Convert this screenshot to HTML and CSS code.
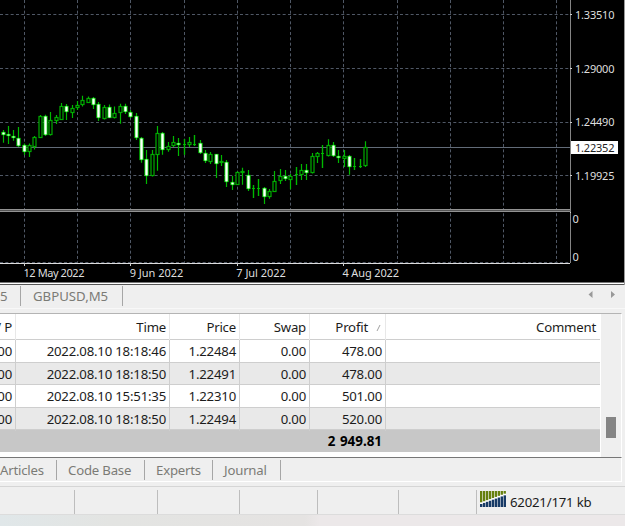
FILE: index.html
```
<!DOCTYPE html>
<html>
<head>
  <meta charset="utf-8">
  <title>Terminal</title>
  <link rel="stylesheet" href="styles.css">
</head>
<body>
  <div class="chart">
    <svg id="chart" width="625" height="285" viewBox="0 0 625 285">
      <g id="grid"></g>
      <path class="bid" d="M0 147.5H570"/>
      <g id="candles"></g>
      <path class="split" d="M0 209.5H570M0 211.5H570"/>
      <path class="split-mid" d="M0 210.5H570"/>
      <path class="axis" d="M570.5 0V263"/>
      <path class="base" d="M0 263.5H570"/>
      <path class="tick" d="M570 14.5h2M570 68.5h2M570 122.5h2M570 175.5h2M24.5 263v3M130.5 263v3M237.5 263v3M343.5 263v3M570 212.5h1"/>
      <rect class="tag" x="571" y="141" width="47" height="13"/>
      <g class="label">
        <text x="575" y="18.8" textLength="39.5">1.33510</text>
        <text x="575" y="72.8" textLength="39.5">1.29000</text>
        <text x="575" y="126.3" textLength="39.5">1.24490</text>
        <text x="575" y="151.8" textLength="39.5" class="dark">1.22352</text>
        <text x="575" y="180.3" textLength="39.5">1.19925</text>
        <text x="572.4" y="222.8">0</text>
        <text x="572.4" y="260.8">0</text>
        <text x="23.5" y="276.8" textLength="61">12 May 2022</text>
        <text x="129.7" y="276.8" textLength="53.5">9 Jun 2022</text>
        <text x="236.3" y="276.8" textLength="49.5">7 Jul 2022</text>
        <text x="342.5" y="276.8" textLength="56.5">4 Aug 2022</text>
      </g>
    </svg>
  </div>

  <div class="chart-tabs">
    <span class="tab first">5</span>
    <span class="tab pair">GBPUSD,M5</span>
    <svg class="arrows" width="30" height="9" viewBox="0 0 30 9">
      <path d="M5.500 1v7L1.500 4.500zM24 1v7l4-3.500z"/>
    </svg>
  </div>

  <div class="toolbox">
    <div class="table">
      <div class="row head">
        <div>/ P</div><div>Time</div><div>Price</div><div>Swap</div>
        <div>Profit<svg class="sort" width="5" height="8" viewBox="0 0 5 8"><path d="M1 7L4 1"/></svg></div>
        <div>Comment</div>
      </div>
      <div class="row"><div>00</div><div>2022.08.10 18:18:46</div><div>1.22484</div><div>0.00</div><div>478.00</div><div></div></div>
      <div class="row alt"><div>00</div><div>2022.08.10 18:18:50</div><div>1.22491</div><div>0.00</div><div>478.00</div><div></div></div>
      <div class="row"><div>00</div><div>2022.08.10 15:51:35</div><div>1.22310</div><div>0.00</div><div>501.00</div><div></div></div>
      <div class="row alt"><div>00</div><div>2022.08.10 18:18:50</div><div>1.22494</div><div>0.00</div><div>520.00</div><div></div></div>
      <div class="total">2 949.81</div>
    </div>
    <div class="scroll"><div class="thumb"></div></div>
  </div>

  <div class="panel-tabs">
    <span class="tab articles">Articles</span>
    <span class="tab code">Code Base</span>
    <span class="tab experts">Experts</span>
    <span class="tab journal">Journal</span>
  </div>

  <div class="status">
    <div class="cell"></div><div class="cell"></div><div class="cell"></div>
    <div class="cell"></div><div class="cell"></div><div class="cell"></div>
    <div class="traffic">
      <svg id="signal" width="26" height="16" viewBox="0 0 26 16"></svg>
      <span>62021/171 kb</span>
    </div>
  </div>
  <div class="desktop"></div>

<script>
  // high, body top, body bottom, low, 1 = bearish (filled)
  const bars = [
    [130,132,135,142.7,1],[126,133.7,136,144,1],[130,136,138,140.7,1],[127,137.5,146,147,1],
    [143.5,145.3,151.7,155,1],[143.5,144.5,151.5,157,0],[136,137,147,149.5,0],[115,116.3,137.5,138,0],
    [114.7,116.3,135,136,1],[112,119.5,134.5,135.5,0],[115,116.5,120.5,124,0],[103,105.5,119.5,120,0],
    [104,105.5,112,120,1],[105,108,112.7,118,0],[101,104.5,108,110,0],[95.7,100,104.7,106.5,0],
    [96.5,98,103,103,0],[97,98,104.5,109,1],[102,103.7,118,121,1],[105,106.5,118.5,119.5,0],
    [104.5,106.5,117.5,118,1],[106.5,112.5,117.5,118.5,0],[103.7,105.5,112.5,123.7,0],[103.7,105.5,112,114,1],
    [110,111.5,116.7,118,1],[113,116.3,138,140,1],[137,138,160,162.7,1],[150,159,176,184,1],
    [150,154,176,176.5,0],[126,133,154.7,170.7,0],[132,133,149.5,154.7,1],[142,146,149.7,151.7,0],
    [136,142,146,147,0],[138,142.7,144.7,156,1],[139,144,144.4,154.7,0],[137,142.3,144.7,147,0],
    [135,144,144.4,146,0],[140,143,153.3,154,1],[150,153,161.3,163,1],[152,154,161.7,164,0],
    [154,154,164,178,1],[155,161.3,163.3,166,0],[160,161.7,181.7,187,1],[176,182,184.7,190,1],
    [171.5,172,184.7,185,0],[167.7,171,172.7,184.7,0],[170,175,188.7,191,1],[185,188,188.4,198,0],
    [179,188,188.4,196,0],[187,188.3,197,204,1],[189,190.7,197,198.7,0],[171,181,191.7,192,0],
    [169,176,181.3,184,0],[170,176,179,181,1],[174,176,180,189.3,0],[167,174.3,175,185,0],
    [164,170,175,180,0],[164,170.3,173.3,180,1],[153,156,173,173.5,0],[152,153.3,157,163,0],
    [145,153,153.4,168,0],[139.3,145.3,156,156.5,0],[142,145.3,156,157,1],[150,156,158,163,1],
    [150,156,159,167,0],[155,156,167.3,174.7,1],[158,166,167.3,170,0],[159,166,166.4,168,0],
    [141.3,147,166.3,167,0]
  ];
  let out = "";
  bars.forEach(([high, top, bottom, low, bear], i) => {
    const x = Math.round(3 + i * 5.333 - 0.5) + 0.5;
    const t = Math.round(top), b = Math.round(bottom);
    out += `<path class="wick" d="M${x} ${high}V${t}M${x} ${b}V${low}"/>`;
    if (b - t < 2) {
      out += `<path class="wick" d="M${x - 1.5} ${t + 0.5}h3M${x} ${high}V${low}"/>`;
    } else {
      out += `<rect class="${bear ? "bear" : "bull"}" x="${x - 1.5}" y="${t + 0.5}" width="3" height="${b - t - 1}"/>`;
      if (bear) out += `<path class="core" d="M${x} ${t + 0.5}V${b - 0.5}"/>`;
    }
  });
  document.getElementById("candles").innerHTML = out;

  let grid = "";
  [24, 77, 130, 184, 237, 290, 343, 397, 450, 503, 556].forEach(x => {
    grid += `<path d="M${x + 0.5} 0V263"/>`;
  });
  [14, 68, 122, 175, 262].forEach(y => {
    grid += `<path d="M0 ${y + 0.5}H570"/>`;
  });
  document.getElementById("grid").innerHTML = grid;

  let signal = `<path class="trend" d="M0 12.5L26 3.500"/>`;
  for (let i = 0; i < 9; i++) {
    const x = i * 2.95;
    const h = 3 + i * 1.08;
    signal += `<rect class="green" x="${x}" y="0" width="2.300" height="${14.3 - h}"/>`;
    signal += `<rect class="blue" x="${x}" y="${16 - h}" width="2.400" height="${h}"/>`;
  }
  document.getElementById("signal").innerHTML = signal;
</script>
</body>
</html>
```
FILE: styles.css
```
* {
  box-sizing: border-box;
}
body {
  margin: 0;
  width: 625px;
  height: 526px;
  overflow: hidden;
  background: #efefef;
  font-family: "Noto Sans", "Open Sans", sans-serif;
  font-size: 13.2px;
  letter-spacing: -0.2px;
  color: #1c1c1c;
}
svg {
  display: block;
}
.chart {
  height: 285px;
  background: linear-gradient(#000 282px, #777 282px, #777 283px, #fff 283px, #fff 284px, #555 284px);
  border-right: 1px solid #999;
}
#grid path {
  stroke: #505866;
  stroke-dasharray: 3 2.333;
}
.bid {
  stroke: #626b78;
}
.wick {
  stroke: #00b800;
  stroke-width: 1.2;
  fill: none;
}
.bull {
  stroke: #00ac00;
  stroke-width: 1.2;
  fill: #000;
}
.bear {
  stroke: #00e000;
  stroke-width: 1.2;
  fill: #fff;
}
.core {
  stroke: #fff;
  stroke-width: 2;
}
.split {
  stroke: #929292;
}
.split-mid {
  stroke: #555;
}
.axis {
  stroke: #858585;
}
.base {
  stroke: #ddd;
}
.tick {
  stroke: #ccc;
}
.tag {
  fill: #fff;
}
.label {
  font-size: 11px;
  letter-spacing: 0;
  fill: #dedede;
}
.label .dark {
  fill: #222;
}
.chart-tabs {
  display: flex;
  height: 28px;
  padding-top: 1px;
  background: linear-gradient(#efefef 23px, #f8f8f8 23px, #f8f8f8 24px, #efefef 24px);
}
.tab {
  height: 20px;
  line-height: 20px;
  border-right: 1px solid #a6a6a6;
  color: #7b7b76;
  white-space: nowrap;
}
.first {
  width: 21px;
}
.pair {
  width: 102px;
  padding-left: 12px;
  letter-spacing: 0;
}
.arrows {
  margin: 4px 0 0 464px;
  fill: #999;
}
.toolbox {
  display: flex;
  width: 622px;
  height: 145px;
  border-top: 1px solid #b4b4b4;
  border-right: 1px solid #fff;
  background: #efefef;
}
.table {
  width: 601px;
  height: 143px;
  background: #fff;
}
.row {
  display: grid;
  grid-template-columns: 16px 154px 70px 70px 76px 214px;
  width: 600px;
  height: 22.6px;
  line-height: 23px;
  border-bottom: 1px solid #cecece;
  text-align: right;
}
.row div {
  padding-right: 3px;
  border-right: 1px solid #cecece;
  white-space: nowrap;
}
.row div:first-child {
  display: flex;
  justify-content: flex-end;
}
.row div:last-child {
  border-right: 0;
}
.alt {
  background: #e9e9e9;
}
.head {
  height: 26px;
  line-height: 27px;
}
.head div {
  border-right-color: #e8e8e8;
}
.head div:nth-child(5) {
  display: flex;
  justify-content: flex-end;
  align-items: center;
  padding-right: 4px;
}
.head div:last-child {
  padding-right: 4px;
}
.sort {
  margin-left: 8px;
  stroke: #888;
  stroke-width: 0.8;
}
.total {
  width: 600px;
  height: 22px;
  padding-right: 218px;
  line-height: 23px;
  background: #c7c7c7;
  color: #000;
  font-size: 13.4px;
  font-weight: bold;
  letter-spacing: 0;
  word-spacing: 1px;
  text-align: right;
}
.scroll {
  width: 20px;
  padding: 103px 0 0 5px;
}
.thumb {
  width: 10px;
  height: 21px;
  background: #858585;
}
.panel-tabs {
  display: flex;
  width: 622px;
  height: 25px;
  margin-top: -1px;
  padding-top: 2px;
  border-top: 1px solid #777;
  border-right: 1px solid #fff;
  border-bottom: 1px solid #fff;
}
.articles {
  width: 57px;
}
.code {
  width: 88px;
  padding-left: 11px;
}
.experts {
  width: 68px;
  padding-left: 11px;
}
.journal {
  width: 68px;
  padding-left: 11px;
}
.status {
  display: flex;
  height: 29px;
  margin-top: 4px;
  padding-top: 3px;
  border-top: 1px solid #d5d5d5;
  border-bottom: 1px solid #dcdcdc;
}
.cell {
  width: 81px;
  height: 24px;
  border-right: 1px solid #bdbdbd;
}
.cell:first-child {
  width: 75px;
}
.cell:nth-child(2) {
  width: 83px;
}
.cell:nth-child(3) {
  width: 82px;
}
.cell:nth-child(4) {
  width: 78px;
}
.cell:nth-child(6) {
  width: 78px;
}
.traffic {
  display: flex;
  padding-left: 3px;
  white-space: nowrap;
}
.traffic svg {
  margin-top: 1px;
}
.traffic span {
  margin-left: 4px;
  line-height: 24px;
}
.green {
  fill: #66800f;
}
.blue {
  fill: #173a66;
}
.trend {
  stroke: #fff;
  stroke-width: 1.5;
}
.desktop {
  height: 11px;
  background: linear-gradient(90deg, #e0e7e9, #e3e4e2 110px, #e5e3e2 305px, #ece8e9 320px, #ece8e9);
}
```
